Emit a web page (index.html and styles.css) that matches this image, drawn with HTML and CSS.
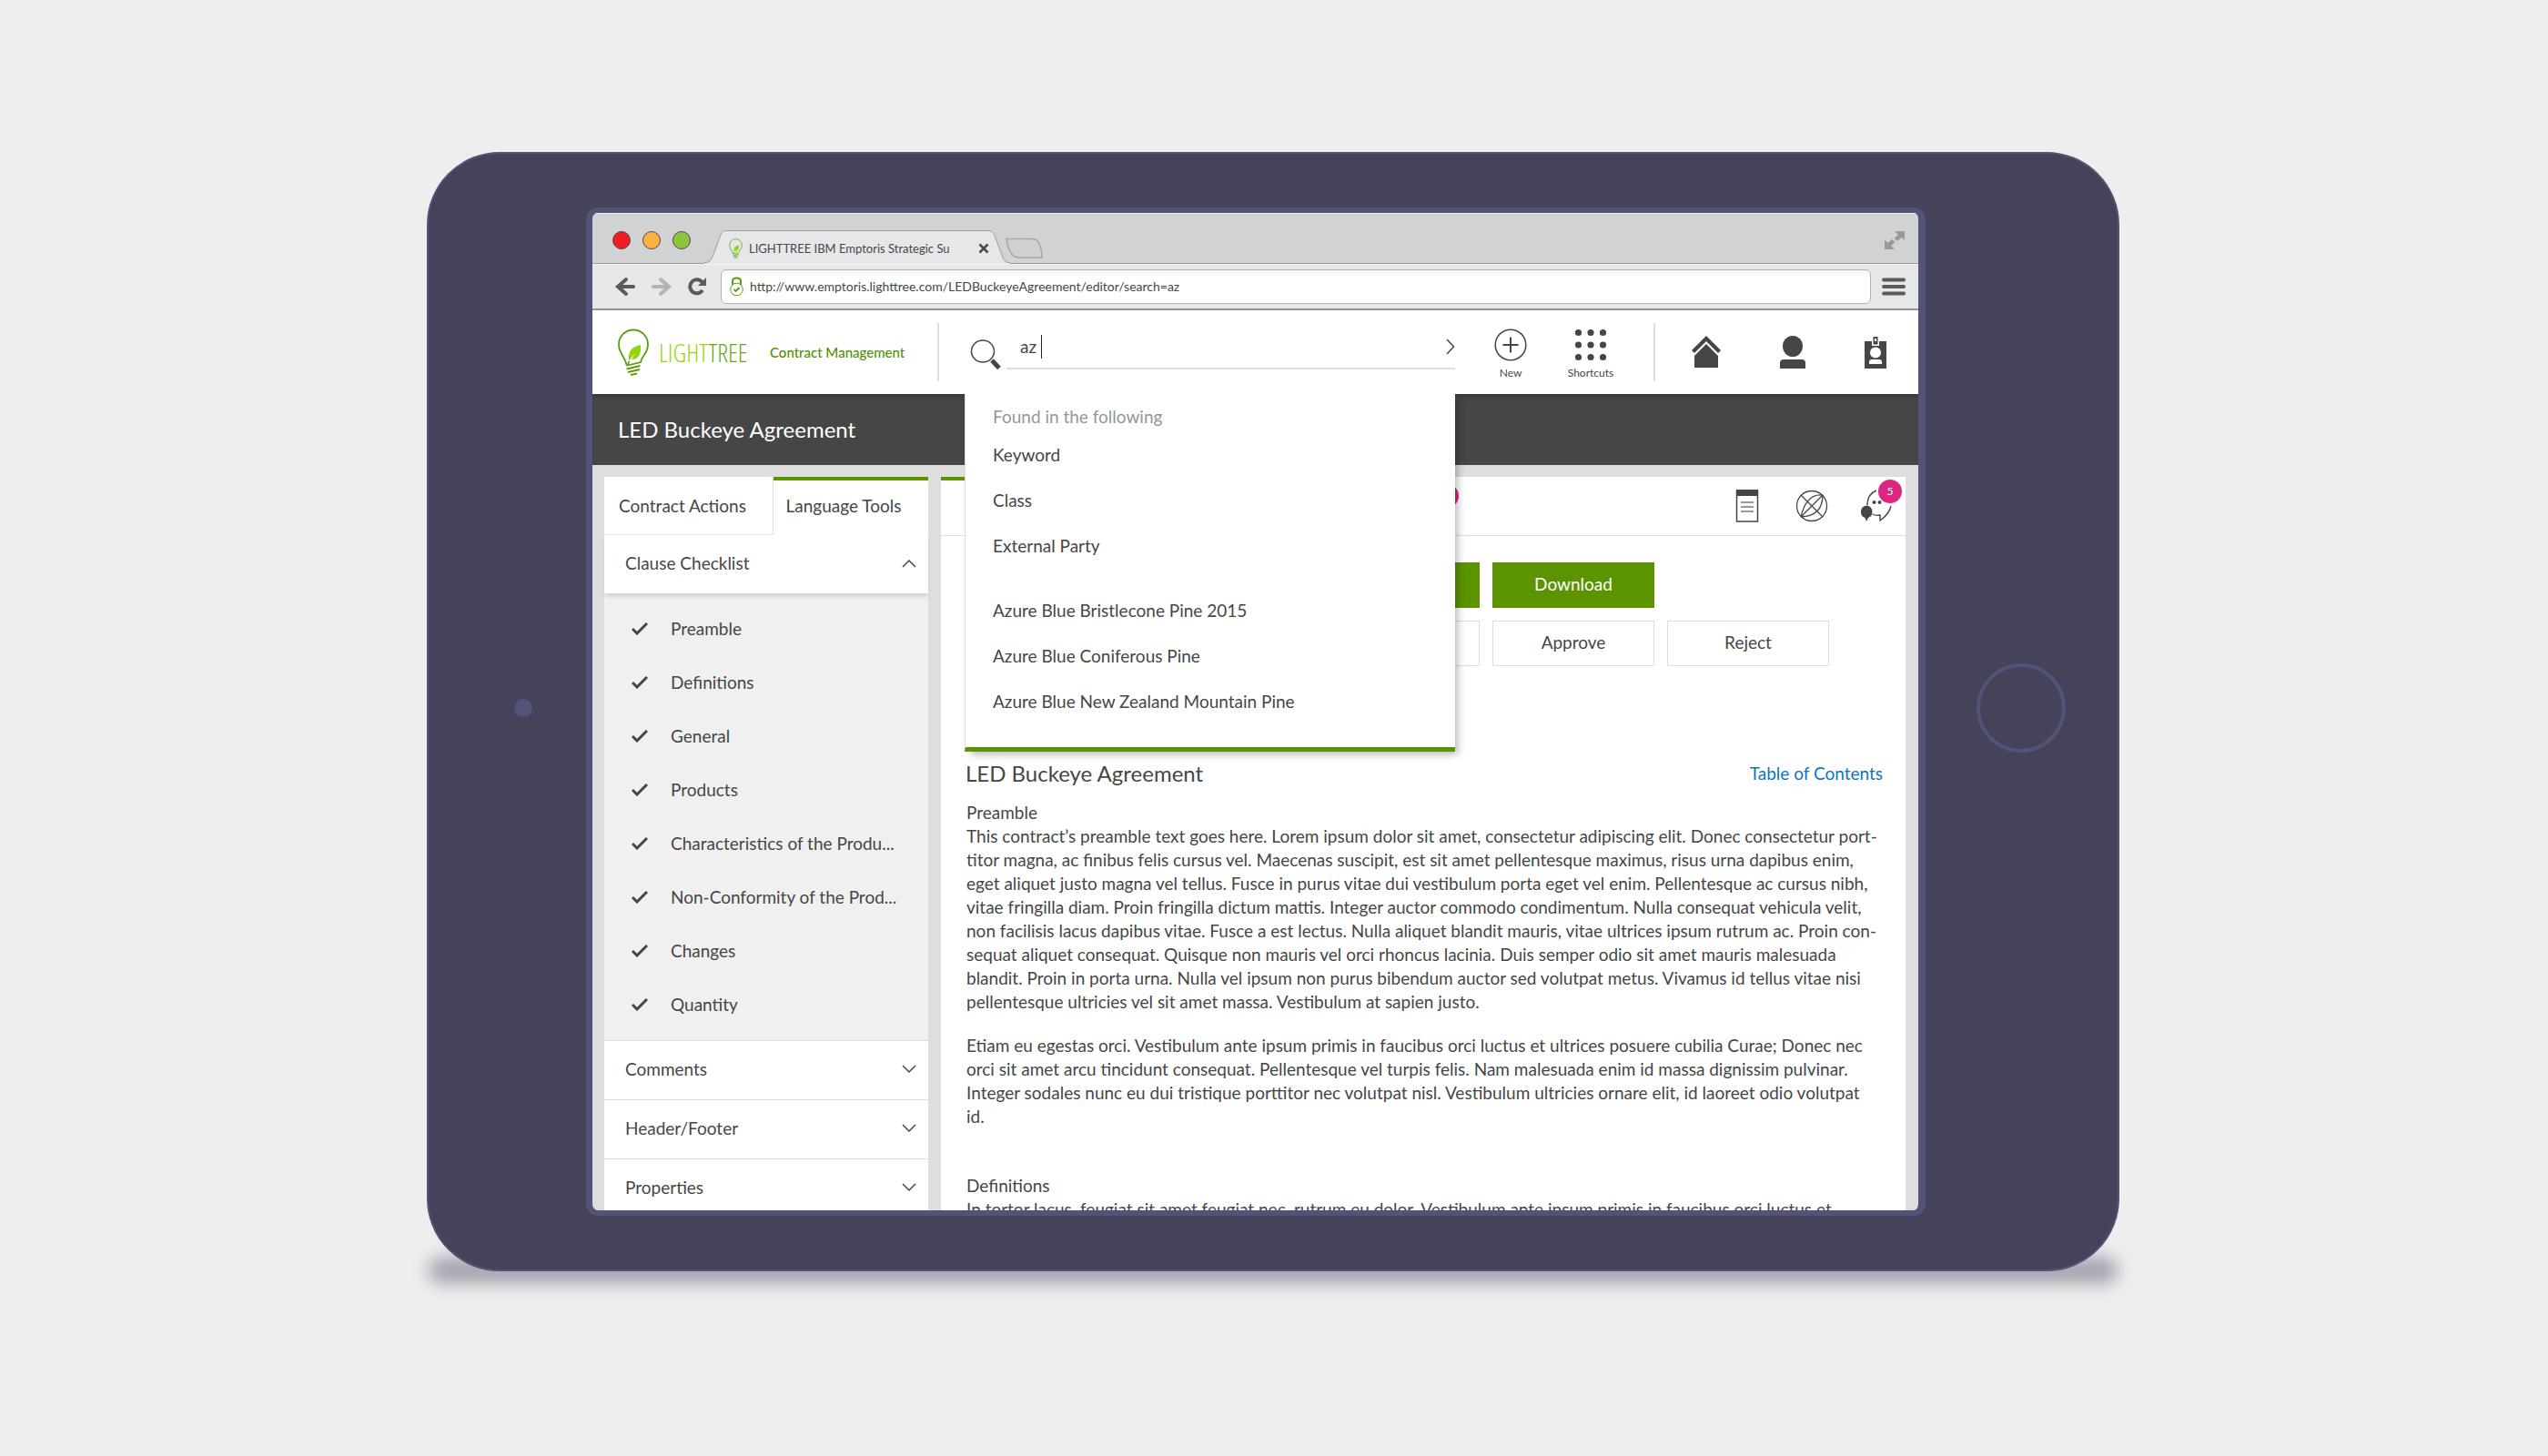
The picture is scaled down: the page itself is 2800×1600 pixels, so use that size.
FILE: index.html
```html
<!DOCTYPE html>
<html lang="en">
<head>
<meta charset="utf-8">
<meta name="viewport" content="width=device-width, initial-scale=1">
<title>LED Buckeye Agreement</title>
<link rel="stylesheet" href="styles.css">
</head>
<body>
<svg class="defs" aria-hidden="true">
  <symbol id="bulb" viewBox="0 0 34 52">
    <path d="M9.500 40C8 30 1 28 1 17.500A16 16 0 0 1 33 17.500C33 28 26 30 25 37L10.500 40.500L12.500 36" fill="none" stroke="#5c9c10" stroke-width="1.800"/>
    <path d="M9.500 44.500l15-3.500M11 48l13-3M14 51l7-1.500" stroke="#5c9c10" stroke-width="1.800"/>
    <path d="M12 36C11 26 14 20 25 18C26 28 23 34 15 34L19 27L12.500 35Z" fill="#95d510"/>
  </symbol>
  <symbol id="check" viewBox="0 0 18 14"><path d="M1 7l5 5L17 1" fill="none" stroke="#464646" stroke-width="3"/></symbol>
  <symbol id="down" viewBox="0 0 16 10"><path d="M1 1l7 7 7-7" fill="none" stroke="#464646" stroke-width="1.500"/></symbol>
</svg>

<div class="tablet">
  <div class="bezel bezel-left"><span class="camera"></span></div>

  <div class="screen">
    <div class="tabstrip">
      <div class="lights"><i class="red"></i><i class="amber"></i><i class="green"></i></div>
      <div class="browser-tab">
        <svg class="tab-shape" viewBox="0 0 336 38" preserveAspectRatio="none"><path d="M0 37C6 37 7 34 9 30L18 5C20 1 22 1 26 1H311C315 1 317 2 319 6L328 31C330 35 331 37 336 37V38H0Z" fill="#e6e7e9"/><path d="M0 36.500C6 36.500 7 34 9 30L18 5C20 1 22 .5 26 .5H311C315 .5 317 2 319 6L328 31C330 35 331 36.500 336 36.500" fill="none" stroke="#9a9a9c"/></svg>
        <svg class="favicon" width="15" height="22"><use href="#bulb"/></svg>
        <span class="tab-title">LIGHTTREE IBM Emptoris Strategic Su</span>
        <button class="plain" aria-label="Close tab"><svg width="12" height="12" viewBox="0 0 12 12"><path d="M1.500 1.500l9 9m0-9l-9 9" stroke="#4d4d4d" stroke-width="2.600"/></svg></button>
      </div>
      <button class="plain new-tab" aria-label="New tab"><svg width="42" height="24" viewBox="0 0 42 24"><path d="M1 1.500H28Q34 1.500 36 5Q40 12 40 22H15Q9 22 6 17Q2 10 1 1.500Z" fill="#cfd0d1" stroke="#a6a7a9" stroke-width="1.500"/></svg></button>
      <button class="plain expand" aria-label="Full screen"><svg width="24" height="22" viewBox="0 0 24 22" fill="#999"><path d="M12 1H23V11L19.500 8L15 12L11.500 9L16 5Z"/><path d="M12 21H1V11L4.500 14L9 10L12.500 13L8 17Z"/></svg></button>
    </div>

    <div class="toolbar">
      <button class="plain" aria-label="Back"><svg width="24" height="22" viewBox="0 0 24 22"><path d="M13 3L4 11l9 8M4 11H21" fill="none" stroke="#5a5a5a" stroke-width="4" stroke-linecap="round"/></svg></button>
      <button class="plain" aria-label="Forward"><svg width="24" height="22" viewBox="0 0 24 22"><path d="M11 3l9 8-9 8M20 11H3" fill="none" stroke="#b4b4b5" stroke-width="4" stroke-linecap="round"/></svg></button>
      <button class="plain" aria-label="Reload"><svg width="22" height="22" viewBox="0 0 22 22"><path d="M17 15A7.500 7.500 0 1 1 16.500 6" fill="none" stroke="#5a5a5a" stroke-width="4"/><path d="M21 1V10H12Z" fill="#5a5a5a"/></svg></button>
      <div class="address">
        <svg width="15" height="22" viewBox="0 0 15 22" fill="none" stroke="#5c9c10"><path d="M3 9V5Q3 1.500 7.500 1.500T12 5V9" stroke-width="2"/><circle cx="7.500" cy="14" r="6.800"/><path d="M4.500 14l2 2 4-4" stroke-width="1.800"/></svg>
        <input class="url" type="text" aria-label="Address" value="http://www.emptoris.lighttree.com/LEDBuckeyeAgreement/editor/search=az">
      </div>
      <button class="plain" aria-label="Menu"><svg width="26" height="20" viewBox="0 0 26 20"><path d="M2 2.500H24M2 10H24M2 17.500H24" stroke="#5a5a5a" stroke-width="4" stroke-linecap="round"/></svg></button>
    </div>

    <header class="app-header">
      <a class="logo" href="#"><svg width="34" height="52"><use href="#bulb"/></svg><span class="wordmark">LIGHT<b>TREE</b></span></a>
      <span class="product">Contract Management</span>
      <span class="rule"></span>
      <form class="search">
        <svg class="lens" width="36" height="36" viewBox="0 0 36 36"><ellipse cx="14" cy="14" rx="12.500" ry="12" fill="none" stroke="#464646" stroke-width="1.500"/><path d="M24 24l8 8.500" stroke="#464646" stroke-width="5"/></svg>
        <div class="field">
          <input class="query" type="text" aria-label="Search" value="az"><span class="caret"></span>
          <button class="plain go" type="button" aria-label="Search"><svg width="10" height="18" viewBox="0 0 10 18"><path d="M1 1l7.500 8L1 17" fill="none" stroke="#464646" stroke-width="1.500"/></svg></button>
        </div>
        <div class="results">
          <p class="hint">Found in the following</p>
          <a href="#">Keyword</a>
          <a href="#">Class</a>
          <a href="#">External Party</a>
          <hr>
          <a href="#">Azure Blue Bristlecone Pine 2015</a>
          <a href="#">Azure Blue Coniferous Pine</a>
          <a href="#">Azure Blue New Zealand Mountain Pine</a>
        </div>
      </form>
      <div class="tools">
        <button><svg width="36" height="36" viewBox="0 0 36 36" fill="none" stroke="#464646"><circle cx="18" cy="18" r="16.800" stroke-width="1.500"/><path d="M18 9.500v17M9.500 18h17" stroke-width="2"/></svg>New</button>
        <button><svg width="36" height="36" viewBox="0 0 36 36"><path d="M4.500 4.500h0M18 4.500h0M31.500 4.500h0M4.500 18h0M18 18h0M31.500 18h0M4.500 31.500h0M18 31.500h0M31.500 31.500h0" stroke="#464646" stroke-width="7.200" stroke-linecap="round"/></svg>Shortcuts</button>
      </div>
      <span class="rule"></span>
      <nav class="global">
        <a href="#" aria-label="Home"><svg width="32" height="36" viewBox="0 0 32 36" fill="#464646"><path d="M16 0L32 16L29 19L16 6L3 19L0 16Z"/><path d="M16 9L29 22V35H3V22Z"/></svg></a>
        <a href="#" aria-label="Profile"><svg width="30" height="36" viewBox="0 0 30 36" fill="#464646"><ellipse cx="15" cy="11.500" rx="11" ry="11.500"/><path d="M1 36V30Q1 26 5 26H25Q29 26 29 30V36Z"/></svg></a>
        <a href="#" aria-label="Badge"><svg width="24" height="36" viewBox="0 0 24 36"><path d="M0 6H24V36H0Z" fill="#464646"/><path d="M8 0H16V11H8Z" fill="#fff"/><path d="M9.500 1H14.500V9.500H9.500Z" fill="#464646"/><path d="M11 3H13V6H11Z" fill="#fff"/><ellipse cx="12" cy="18.500" rx="6" ry="6" fill="#fff"/><path d="M5 31V29Q5 26 8 26H16Q19 26 19 29V31Z" fill="#fff"/></svg></a>
      </nav>
    </header>

    <div class="titlebar"><h1>LED Buckeye Agreement</h1></div>

    <div class="workspace">
      <aside class="sidebar">
        <div class="side-tabs"><button>Contract Actions</button><button class="active">Language Tools</button></div>
        <button class="section open">Clause Checklist<svg class="up" width="16" height="10"><use href="#down"/></svg></button>
        <ul class="clauses">
          <li><svg width="18" height="14"><use href="#check"/></svg>Preamble</li>
          <li><svg width="18" height="14"><use href="#check"/></svg>Definitions</li>
          <li><svg width="18" height="14"><use href="#check"/></svg>General</li>
          <li><svg width="18" height="14"><use href="#check"/></svg>Products</li>
          <li><svg width="18" height="14"><use href="#check"/></svg>Characteristics of the Produ...</li>
          <li><svg width="18" height="14"><use href="#check"/></svg>Non-Conformity of the Prod...</li>
          <li><svg width="18" height="14"><use href="#check"/></svg>Changes</li>
          <li><svg width="18" height="14"><use href="#check"/></svg>Quantity</li>
        </ul>
        <button class="section">Comments<svg width="16" height="10"><use href="#down"/></svg></button>
        <button class="section">Header/Footer<svg width="16" height="10"><use href="#down"/></svg></button>
        <button class="section">Properties<svg width="16" height="10"><use href="#down"/></svg></button>
      </aside>

      <main class="document">
        <div class="doc-tabs">
          <button class="doc-tab" aria-label="Editor"><span class="badge"></span></button>
          <div class="doc-icons">
            <button class="plain" aria-label="Notes"><svg width="26" height="36" viewBox="0 0 26 36"><path d="M1.500 1H24.500V35H1.500Z" fill="#fff" stroke="#464646" stroke-width="1.500"/><path d="M1 0H25V7H1Z" fill="#464646"/><path d="M6 14H20M6 19H20M6 24H20" stroke="#777" stroke-width="1.600"/></svg></button>
            <button class="plain" aria-label="Network"><svg width="36" height="36" viewBox="0 0 36 36" fill="none" stroke="#464646" stroke-width="1.300"><circle cx="18" cy="18" r="16.500"/><path d="M6 6L30 30M30 6L6 30M30 6Q12 4 6 30M30 6Q30 29 6 30"/></svg></button>
            <button class="plain chat" aria-label="Messages"><svg width="36" height="36" viewBox="0 0 36 36"><path d="M18 1Q8 5 8 17M14 27Q17 29 22 28L22 34Q32 27 34 18" fill="none" stroke="#464646" stroke-width="1.400"/><circle cx="15.500" cy="14" r="2" fill="#464646"/><circle cx="21.500" cy="14" r="2" fill="#464646"/><path d="M7 17.500A7 7 0 0 1 9 31L7 35L5.500 31A7 7 0 0 1 7 17.500Z" fill="#464646"/></svg><span class="badge">5</span></button>
          </div>
        </div>
        <div class="actions">
          <button class="primary third" aria-label="Upload"></button>
          <button class="primary">Download</button>
          <button class="third" aria-label="Submit"></button>
          <button>Approve</button>
          <button>Reject</button>
        </div>
        <div class="doc-head"><h2>LED Buckeye Agreement</h2><a href="#">Table of Contents</a></div>
        <article>
          <h3>Preamble</h3>
          <p>This contract’s preamble text goes here. Lorem ipsum dolor sit amet, consectetur adipiscing elit. Donec consectetur port-<br>titor magna, ac finibus felis cursus vel. Maecenas suscipit, est sit amet pellentesque maximus, risus urna dapibus enim,<br>eget aliquet justo magna vel tellus. Fusce in purus vitae dui vestibulum porta eget vel enim. Pellentesque ac cursus nibh,<br>vitae fringilla diam. Proin fringilla dictum mattis. Integer auctor commodo condimentum. Nulla consequat vehicula velit,<br>non facilisis lacus dapibus vitae. Fusce a est lectus. Nulla aliquet blandit mauris, vitae ultrices ipsum rutrum ac. Proin con-<br>sequat aliquet consequat. Quisque non mauris vel orci rhoncus lacinia. Duis semper odio sit amet mauris malesuada<br>blandit. Proin in porta urna. Nulla vel ipsum non purus bibendum auctor sed volutpat metus. Vivamus id tellus vitae nisi<br>pellentesque ultricies vel sit amet massa. Vestibulum at sapien justo.</p>
          <p>Etiam eu egestas orci. Vestibulum ante ipsum primis in faucibus orci luctus et ultrices posuere cubilia Curae; Donec nec<br>orci sit amet arcu tincidunt consequat. Pellentesque vel turpis felis. Nam malesuada enim id massa dignissim pulvinar.<br>Integer sodales nunc eu dui tristique porttitor nec volutpat nisl. Vestibulum ultricies ornare elit, id laoreet odio volutpat<br>id.</p>
          <h3 class="next">Definitions</h3>
          <p>In tortor lacus, feugiat sit amet feugiat nec, rutrum eu dolor. Vestibulum ante ipsum primis in faucibus orci luctus et</p>
        </article>
      </main>
    </div>
  </div>

  <div class="bezel bezel-right"><button class="home" aria-label="Home button"></button></div>
</div>
</body>
</html>
```

FILE: styles.css
```css
:root {
  --ink: #464646;
  --green: #5b9400;
  --line: #dedede;
  --frame: #525379;
}

* { box-sizing: border-box; }

body {
  margin: 0;
  min-height: 100vh;
  padding: 167px 471px 160px 469px;
  background: #eeeeee;
  color: var(--ink);
  font: 19px/26px Lato, "Open Sans", sans-serif;
}

h1, h2, h3, p, ul { margin: 0; padding: 0; font-weight: 400; }
h3 { font-size: 19px; }
a { color: inherit; text-decoration: none; }
button, input { font: inherit; color: inherit; }
button { border: 0; border-radius: 0; padding: 0; background: #fff; cursor: pointer; }
svg { display: block; flex: none; }
.plain { background: none; }
.defs { position: absolute; width: 0; height: 0; }

/* Device */
.tablet {
  position: relative;
  display: flex;
  padding: 59px 0;
  border: 2px solid var(--frame);
  border-radius: 80px;
  background: #444359;
}
.tablet::before {
  content: "";
  position: absolute;
  z-index: -1;
  left: 0;
  right: 0;
  bottom: -16px;
  height: 30px;
  border-radius: 14px;
  background: #a6a6b2;
  filter: blur(9px);
}
.bezel { display: flex; align-items: center; flex: none; padding-bottom: 8px; }
.bezel-left { width: 173px; padding-left: 94px; }
.bezel-right { width: 211px; padding-right: 2px; justify-content: center; }
.camera { width: 20px; height: 20px; border-radius: 50%; background: var(--frame); }
.home { width: 98px; height: 98px; border: 4px solid var(--frame); border-radius: 50%; background: none; }

.screen {
  flex: 1;
  min-width: 0;
  aspect-ratio: 1472 / 1108;
  display: flex;
  flex-direction: column;
  overflow: hidden;
  border: solid var(--frame);
  border-width: 6px 8px 6px 7px;
  border-radius: 13px;
  background: #dedede;
}
.screen > * { flex: none; }

/* Browser chrome */
.tabstrip {
  display: flex;
  align-items: flex-end;
  height: 56px;
  padding: 0 14px 0 22px;
  border-top: 1px solid #f2f2f2;
  border-bottom: 1px solid #9a9a9c;
  background: #d1d2d3;
}
.lights { display: flex; gap: 13px; align-self: center; padding-top: 4px; margin-right: 15px; }
.lights i { width: 20px; height: 20px; border: 1px solid #55484a; border-radius: 50%; }
.red { background: #ee1c25; }
.amber { background: #fbb040; }
.green { background: #8cc63e; }
.browser-tab {
  position: relative;
  display: flex;
  align-items: center;
  gap: 7px;
  width: 336px;
  height: 37px;
  margin-bottom: -1px;
  padding: 2px 23px 0 27px;
}
.tab-shape { position: absolute; inset: 0; width: 100%; height: 100%; }
.favicon, .tab-title, .browser-tab button { position: relative; }
.tab-title { flex: 1; font-size: 13px; white-space: nowrap; }
.new-tab { margin-bottom: 4px; margin-left: -5px; }
.expand { margin: 0 0 14px auto; }
.toolbar {
  display: flex;
  align-items: center;
  gap: 16px;
  height: 51px;
  padding: 0 14px 0 24px;
  border-top: 1px solid #f4f4f5;
  border-bottom: 2px solid #92929a;
  background: #e6e7e9;
}
.address {
  flex: 1;
  display: flex;
  align-items: center;
  gap: 7px;
  height: 38px;
  margin-left: -1px;
  margin-right: -4px;
  padding: 0 9px;
  border: 1px solid #b1b2b4;
  border-radius: 6px;
  background: linear-gradient(#f3f3f3, #fff 8px);
}
.url { flex: 1; min-width: 0; padding: 0; border: 0; background: none; font-size: 14px; }

/* Application header */
.app-header {
  position: relative;
  z-index: 2;
  display: flex;
  align-items: center;
  height: 92px;
  padding: 0 35px 0 28px;
  background: #fff;
}
.logo { display: flex; align-items: center; gap: 11px; width: 167px; }
.wordmark { color: #95d510; font: 300 28px/32px "Open Sans Condensed Light", "Roboto Condensed", Lato, sans-serif; }
.wordmark b { color: #6aa51b; font-weight: 300; }
.product { width: 184px; color: #4f9200; font-size: 15px; font-weight: 500; }
.rule { width: 2px; height: 64px; background: var(--line); }
.search { display: flex; align-items: center; position: relative; align-self: stretch; flex: 1; padding-left: 34px; }
.lens { margin-top: 6px; }
.field {
  flex: 1;
  display: flex;
  align-items: center;
  height: 48px;
  margin: 0 0 10px 4px;
  padding-left: 15px;
  border-bottom: 2px solid var(--line);
}
.query { width: 23px; padding: 0; border: 0; outline: 0; }
.caret { width: 1px; height: 26px; background: #222; }
.go { margin-left: auto; }
.results {
  position: absolute;
  top: 100%;
  left: 28px;
  right: 0;
  display: flex;
  flex-direction: column;
  height: 393px;
  padding: 12px 30px 0;
  border-left: 1px solid var(--line);
  border-bottom: 5px solid var(--green);
  background: #fff;
  box-shadow: 5px 5px 8px -2px rgba(0, 0, 0, .28);
  clip-path: inset(0 -20px -20px -20px);
}
.results a { line-height: 50px; }
.results hr { width: 100%; height: 21px; margin: 0; border: 0; }
.hint { margin-bottom: 4px; color: #969696; }
.tools { display: flex; padding: 6px 25px 0 17px; }
.tools button { display: flex; flex-direction: column; align-items: center; gap: 4px; width: 88px; font-size: 12px; line-height: 18px; }
.global { display: flex; gap: 64px; padding-left: 40px; }

.titlebar {
  display: flex;
  align-items: center;
  height: 78px;
  padding-left: 28px;
  background: var(--ink);
  box-shadow: inset 0 5px 5px -3px #333;
  color: #fff;
}
h1, h2 { font-size: 24px; line-height: 30px; }

/* Workspace */
.workspace { display: flex; gap: 14px; align-items: flex-start; padding: 13px 14px 0 13px; }
.sidebar { flex: none; width: 356px; background: #f0f0f0; }
.side-tabs { display: flex; background: #fff; }
.side-tabs button { width: 186px; height: 64px; padding-right: 13px; border: solid #e2e2e2; border-width: 0 1px 1px 0; }
.side-tabs .active { width: 170px; padding: 0 16px 4px 0; border: 0; border-top: 4px solid var(--green); }
.section {
  display: flex;
  align-items: center;
  justify-content: space-between;
  width: 100%;
  height: 65px;
  padding: 0 13px 2px 23px;
  border-top: 1px solid var(--line);
}
.section.open { height: 64px; border: 0; box-shadow: 0 4px 5px -1px #cbcbcb; }
.up { transform: rotate(180deg); }
.clauses { padding: 9px 0 10px 30px; list-style: none; }
.clauses li { display: flex; align-items: center; gap: 25px; height: 59px; }

.document { flex: 1; min-width: 0; min-height: 900px; background: #fff; }
.doc-tabs { display: flex; justify-content: space-between; height: 65px; border-bottom: 1px solid var(--line); }
.doc-tab { position: relative; width: 560px; border-top: 4px solid; border-image: linear-gradient(90deg, var(--green) 400px, transparent 400px) 4; }
.doc-icons { display: flex; align-items: center; gap: 40px; padding-right: 14px; }
.badge {
  position: absolute;
  display: block;
  width: 26px;
  height: 26px;
  border-radius: 50%;
  background: #dc2680;
  color: #fff;
  font-size: 12px;
  line-height: 26px;
}
.doc-tab .badge { right: -9px; top: 4px; }
.chat { position: relative; margin-left: -5px; }
.chat .badge { top: -11px; right: -10px; }
.actions {
  display: grid;
  grid-template-columns: repeat(5, 178px);
  gap: 14px;
  padding: 29px 0 0 30px;
}
.actions button { height: 50px; border: 1px solid var(--line); padding-bottom: 2px; }
.actions .third { grid-column: 3; }
.actions .primary { border: 0; background: var(--green); color: #fff; }
.doc-head { display: flex; justify-content: space-between; align-items: center; padding: 103px 25px 0 27px; }
.doc-head a { color: #0b76bb; }
article { padding: 15px 0 0 28px; white-space: nowrap; }
article p + p { margin-top: 22px; }
.next { margin-top: 50px; }
```
